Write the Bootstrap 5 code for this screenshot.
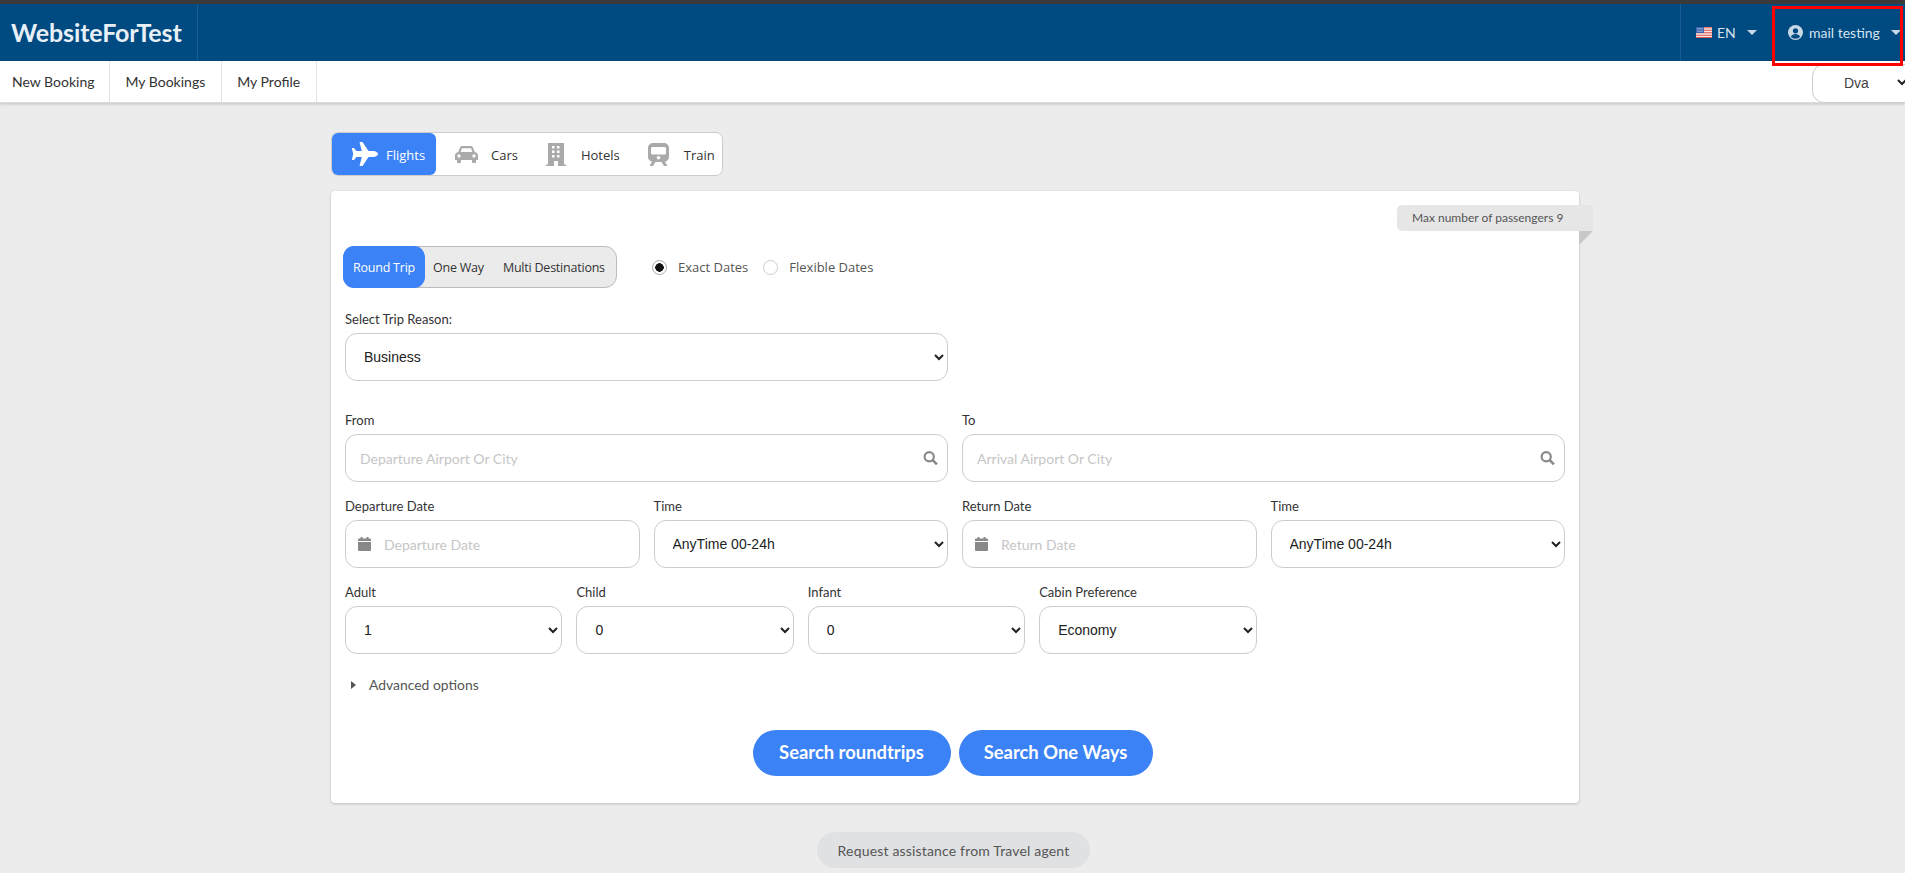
<!DOCTYPE html>
<html lang="en">
<head>
<meta charset="utf-8">
<title>WebsiteForTest</title>
<link href="https://cdn.jsdelivr.net/npm/bootstrap@5.3.0/dist/css/bootstrap.min.css" rel="stylesheet">
<style>
html,body{height:873px;overflow:hidden}
body{background:#ececec;font-family:Lato,sans-serif;font-size:14px;color:#333;border-top:4px solid #3a3a3a}
.topbar{background:#004a82;height:57px;padding:0}
.brandbox{height:57px;width:198px;padding-left:11px;display:flex;align-items:center;border-right:1px solid #1a5c92;color:#e8f0f7;font-size:25px;font-weight:700;letter-spacing:-.1px}
.top-item{height:57px;display:flex;align-items:center;color:#d5e3ee;font-size:14px;white-space:nowrap}
.lang-item{border-left:1px solid #1a5c92;width:92px;padding-left:15px}
.user-item{width:132px;padding-left:16px;margin-right:1px}
.flagmark{margin-right:5px}
.usermark{margin-right:6px}
.caret-mark{display:inline-block;border-top:5px solid #c9d8e5;border-left:5px solid transparent;border-right:5px solid transparent;margin-left:11px}
.redbox{position:absolute;left:1772px;top:6px;width:131px;height:60px;border:3px solid #f00;z-index:5;pointer-events:none}
.subbar{background:#fff;height:42px;box-shadow:0 1px 3px rgba(0,0,0,.18);border-bottom:1px solid #ddd;position:relative}
.sub-link{display:flex;align-items:center;height:41px;border-right:1px solid #e3e3e3;color:#333;text-decoration:none;font-size:14px;padding:0 15.5px}
.sub-link.firstone{padding:0 12px;width:110px}
.agency-box{position:absolute;left:1812px;top:3px;width:120px;height:39px;background:#fff;border:1px solid #ccc;border-radius:12px;font-family:"Liberation Sans",sans-serif;font-size:14px;color:#444;display:flex;align-items:center;padding-left:31px}
.agency-box svg{position:absolute;left:83px;top:13px}
.mainwrap{width:1248px;margin-left:331px}
.modes{display:inline-flex;height:44px;background:#fff;border:1px solid #ccc;border-radius:7px;margin-top:29px;font-family:"Open Sans",sans-serif;font-size:13px;color:#333;width:392px}
.mode-tab{display:flex;align-items:center;height:42px;text-decoration:none;color:#333}
.mode-tab.isactive{background:#3b82f6;color:#fff;border-radius:6px;width:104px;padding-left:19px}
.mode-tab svg{flex:none}
.mode-text{margin-top:3px}
.searchcard{position:relative;background:#fff;border-radius:4px;box-shadow:0 1px 3px rgba(0,0,0,.2);margin-top:15px;height:612px;padding:55px 14px 0}
.ribbon{position:absolute;left:1066px;top:14px;width:196px;height:26px;background:#e6e6e6;border-radius:5px 0 0 5px;font-size:12px;color:#555;display:flex;align-items:center;padding-left:15px}
.ribbon-fold{position:absolute;left:1248px;top:40px;width:0;height:0;border-top:14px solid #c8c8c8;border-right:14px solid transparent}
.triprow{display:flex;align-items:center}
.trip-group{display:flex;height:42px;background:#ebebeb;border:1px solid #bbb;border-radius:12px;width:274px;font-family:"Open Sans",sans-serif;font-size:12.5px;letter-spacing:-.22px;color:#333;margin-left:-2px;white-space:nowrap}
.trip-opt{display:flex;align-items:center;text-decoration:none;color:#333;padding-top:2px}
.trip-opt.isactive{background:#3b82f6;color:#fff;border-radius:11px;width:82px;justify-content:center;height:42px;margin:-1px 0 -1px -1px}
.dateradio{margin-left:35px;display:flex;align-items:center;font-family:"Open Sans",sans-serif;font-size:13px;color:#555;padding-top:1px}
.dateradio .form-check-input{width:15px;height:15px;margin:0;border-color:#ccc;box-shadow:none;flex:none}
.dateradio .form-check-input:checked{background-color:#fff;border-color:#aaa;background-image:radial-gradient(circle,#111 0,#111 4px,transparent 4.5px)}
.dateradio label{margin:0 15px 0 11px}
.fieldlabel{display:block;font-size:13px;color:#333;line-height:17px;margin:1px 0 5px}
.fieldrow{--bs-gutter-x:14px;--bs-gutter-y:0}
.tallfield{height:48px;border:1px solid #ccc;border-radius:12px;font-size:14px;box-shadow:none}
select.tallfield{appearance:auto;-webkit-appearance:auto;background-image:none;font-family:"Liberation Sans",sans-serif;color:#222;padding:0 0 0 14px;background-color:#fff}
input.tallfield{font-family:Lato,sans-serif;padding-left:14px}
input.tallfield.calfield{padding-left:38px}
input.tallfield::placeholder{color:#c6c6c6}
.fieldwrap{position:relative}
.fieldwrap svg{position:absolute;top:50%;transform:translateY(-50%)}
.advopts{display:flex;align-items:center;color:#555;font-size:13.9px;margin-top:21px;margin-left:6px}
.advopts i{display:block;border-left:5px solid #555;border-top:4px solid transparent;border-bottom:4px solid transparent;margin-right:13px}
.bigbtn{background:#3b82f6;border:0;border-radius:23px;height:46px;color:#fff;font-weight:700;font-size:18.4px;padding:0;font-family:Lato,sans-serif}
.bigbtn:hover{background:#3b82f6;color:#fff}
.actionrow{margin-top:34px;padding-right:5px}
.helpbtn{display:block;width:273px;height:36px;margin:29px 0 0 486px;border-radius:18px;background:#dfe1e3;border:0;color:#555;font-size:14px;font-weight:400;letter-spacing:.17px;padding:0}
</style>
</head>
<body>
<div class="redbox"></div>
<nav class="topbar d-flex justify-content-between">
  <div class="brandbox">WebsiteForTest</div>
  <div class="d-flex">
    <div class="top-item lang-item">
      <svg class="flagmark" width="16" height="11" viewBox="0 0 16 11"><rect width="16" height="11" fill="#f4e9e6"/><path d="M0 .8h16M0 3.300h16M0 5.800h16M0 8.300h16M0 10.500h16" stroke="#e0524c" stroke-width="1.100"/><rect width="8" height="6" fill="#3f63ad"/><path d="M1.500 1.500h5M1.500 3h5M1.500 4.500h5" stroke="#dfe6f5" stroke-width=".8" stroke-dasharray="1 1"/></svg>
      <span>EN</span><span class="caret-mark"></span>
    </div>
    <div class="top-item user-item">
      <svg class="usermark" width="15" height="15" viewBox="0 0 16 16"><circle cx="8" cy="8" r="8" fill="#c9d8e5"/><circle cx="8" cy="6.200" r="2.800" fill="#004a82"/><path d="M3 12.600c1-2.200 3-3 5-3s4 .8 5 3c-1.300 1.400-3 2.100-5 2.100s-3.700-.7-5-2.100z" fill="#004a82"/></svg>
      <span>mail testing</span><span class="caret-mark"></span>
    </div>
  </div>
</nav>
<div class="subbar d-flex">
  <a class="sub-link firstone" href="#">New Booking</a>
  <a class="sub-link" href="#">My Bookings</a>
  <a class="sub-link" href="#">My Profile</a>
  <div class="agency-box">Dva<svg width="12" height="9" viewBox="0 0 12 9"><path d="M2 2l4 4 4-4" fill="none" stroke="#222" stroke-width="2"/></svg></div>
</div>
<main class="mainwrap">
  <div class="modes">
    <a class="mode-tab isactive" href="#">
      <svg width="27" height="24" viewBox="0 0 27 24" fill="#fff"><path d="M27 12c0-1.500-2.500-2.900-4.500-2.900h-5L11.500 0H8.500l2.300 9.100H5.400L3 6H.8l1.400 6-1.400 6H3l2.400-3.100h5.400L8.500 24h3l6-9.100h5c2 0 4.500-1.400 4.500-2.900z"/></svg>
      <span class="mode-text" style="margin-left:8px">Flights</span>
    </a>
    <a class="mode-tab" href="#" style="margin-left:19px">
      <svg width="23" height="17" viewBox="0 0 23 17" fill="#aaa"><path fill-rule="evenodd" d="M5 1.500C5.400.6 6.200 0 7.200 0h8.600c1 0 1.800.6 2.200 1.500L19.700 6c1.900.4 3.300 1.700 3.300 3.500V14h-2v2.200c0 .4-.4.800-.8.800h-2.400c-.4 0-.8-.4-.8-.8V14H6v2.200c0 .4-.4.800-.8.800H2.800c-.4 0-.8-.4-.8-.8V14H0V9.500C0 7.700 1.400 6.400 3.300 6zM6.900 2.300L5.700 6h11.600l-1.200-3.700zM4 8.200a1.700 1.700 0 100 3.400A1.700 1.700 0 004 8.200zm15 0a1.700 1.700 0 100 3.400 1.700 1.700 0 000-3.400z"/></svg>
      <span class="mode-text" style="margin-left:13px">Cars</span>
    </a>
    <a class="mode-tab" href="#" style="margin-left:28px">
      <svg width="20" height="23" viewBox="0 0 20 23" fill="#aaa"><path fill-rule="evenodd" d="M2 0h16v21.500h2V23h-8v-5H8v5H0v-1.500h2zM6 3v2.400h2.500V3zm5 0v2.400h2.500V3zM6 7.500v2.400h2.500V7.500zm5 0v2.400h2.500V7.500zM6 12v2.400h2.500V12zm5 0v2.400h2.500V12z"/></svg>
      <span class="mode-text" style="margin-left:15px">Hotels</span>
    </a>
    <a class="mode-tab" href="#" style="margin-left:28px">
      <svg width="21" height="23" viewBox="0 0 21 23" fill="#aaa"><path fill-rule="evenodd" d="M5 0h11c2.800 0 5 2.200 5 5v9c0 2.400-1.800 4.300-4.100 4.700L19 22v1h-3l-2.500-4h-6L5 23H2v-1l2.100-3.300C1.800 18.300 0 16.400 0 14V5c0-2.800 2.200-5 5-5zM4.500 4C3.700 4 3 4.700 3 5.500V10c0 .8.700 1.500 1.500 1.500h12c.8 0 1.500-.7 1.500-1.500V5.500C18 4.700 17.300 4 16.500 4zM10.500 13a1.800 1.800 0 100 3.600 1.800 1.800 0 000-3.600z"/></svg>
      <span class="mode-text" style="margin-left:15px">Train</span>
    </a>
  </div>
  <section class="searchcard">
    <div class="ribbon">Max number of passengers 9</div>
    <div class="ribbon-fold"></div>
    <div class="triprow">
      <div class="trip-group">
        <a class="trip-opt isactive" href="#">Round Trip</a>
        <a class="trip-opt" href="#" style="margin-left:8px">One Way</a>
        <a class="trip-opt" href="#" style="margin-left:19px">Multi Destinations</a>
      </div>
      <div class="dateradio">
        <input class="form-check-input" type="radio" name="datemode" id="r1" checked><label for="r1">Exact Dates</label>
        <input class="form-check-input" type="radio" name="datemode" id="r2"><label for="r2">Flexible Dates</label>
      </div>
    </div>
    <div class="row fieldrow" style="margin-top:22px">
      <div class="col-6">
        <label class="fieldlabel">Select Trip Reason:</label>
        <select class="form-select tallfield"><option>Business</option></select>
      </div>
    </div>
    <div class="row fieldrow" style="margin-top:30px">
      <div class="col-6">
        <label class="fieldlabel">From</label>
        <div class="fieldwrap">
          <input class="form-control tallfield" placeholder="Departure Airport Or City">
          <svg style="right:10px" width="15" height="15" viewBox="0 0 14 14"><circle cx="5.800" cy="5.800" r="4.300" fill="none" stroke="#888" stroke-width="2"/><path d="M9 9l4 4" stroke="#888" stroke-width="2.400"/></svg>
        </div>
      </div>
      <div class="col-6">
        <label class="fieldlabel">To</label>
        <div class="fieldwrap">
          <input class="form-control tallfield" placeholder="Arrival Airport Or City">
          <svg style="right:10px" width="15" height="15" viewBox="0 0 14 14"><circle cx="5.800" cy="5.800" r="4.300" fill="none" stroke="#888" stroke-width="2"/><path d="M9 9l4 4" stroke="#888" stroke-width="2.400"/></svg>
        </div>
      </div>
    </div>
    <div class="row fieldrow" style="margin-top:15px">
      <div class="col-3">
        <label class="fieldlabel">Departure Date</label>
        <div class="fieldwrap">
          <input class="form-control tallfield calfield" placeholder="Departure Date">
          <svg style="left:13px" width="13" height="14" viewBox="0 0 13 14" fill="#888"><path d="M0 5h13v8a1 1 0 01-1 1H1a1 1 0 01-1-1zM1 1.500h1.500V0h2v1.500h4V0h2v1.500H12a1 1 0 011 1V4H0V2.500a1 1 0 011-1z"/></svg>
        </div>
      </div>
      <div class="col-3">
        <label class="fieldlabel">Time</label>
        <select class="form-select tallfield"><option>AnyTime 00-24h</option></select>
      </div>
      <div class="col-3">
        <label class="fieldlabel">Return Date</label>
        <div class="fieldwrap">
          <input class="form-control tallfield calfield" placeholder="Return Date">
          <svg style="left:13px" width="13" height="14" viewBox="0 0 13 14" fill="#888"><path d="M0 5h13v8a1 1 0 01-1 1H1a1 1 0 01-1-1zM1 1.500h1.500V0h2v1.500h4V0h2v1.500H12a1 1 0 011 1V4H0V2.500a1 1 0 011-1z"/></svg>
        </div>
      </div>
      <div class="col-3">
        <label class="fieldlabel">Time</label>
        <select class="form-select tallfield"><option>AnyTime 00-24h</option></select>
      </div>
    </div>
    <div class="row fieldrow" style="margin-top:15px">
      <div class="col-9">
        <div class="row fieldrow">
          <div class="col-3"><label class="fieldlabel">Adult</label><select class="form-select tallfield"><option>1</option></select></div>
          <div class="col-3"><label class="fieldlabel">Child</label><select class="form-select tallfield"><option>0</option></select></div>
          <div class="col-3"><label class="fieldlabel">Infant</label><select class="form-select tallfield"><option>0</option></select></div>
          <div class="col-3"><label class="fieldlabel">Cabin Preference</label><select class="form-select tallfield"><option>Economy</option></select></div>
        </div>
      </div>
    </div>
    <div class="advopts"><i></i>Advanced options</div>
    <div class="d-flex justify-content-center gap-2 actionrow">
      <button class="btn bigbtn" style="width:198px">Search roundtrips</button>
      <button class="btn bigbtn" style="width:194px">Search One Ways</button>
    </div>
  </section>
  <button class="btn helpbtn">Request assistance from Travel agent</button>
</main>
</body>
</html>
